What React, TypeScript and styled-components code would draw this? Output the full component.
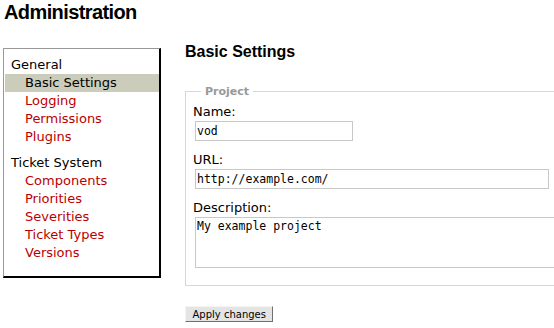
import styled, { createGlobalStyle } from "styled-components";

const GlobalStyle = createGlobalStyle`
  html, body {
    margin: 0;
    padding: 0;
    overflow: hidden;
    background: #fff;
  }
  body {
    font-family: "DejaVu Sans", Verdana, sans-serif;
    font-size: 13px;
    color: #000;
  }
`;

const Page = styled.div`
  padding: 1px 0 0 3px;
`;

const Title = styled.h1`
  margin: 0 0 0 1px;
  font: bold 20px/22px "Liberation Sans", Arial, sans-serif;
  letter-spacing: -0.6px;
`;

const Columns = styled.div`
  display: flex;
  align-items: flex-start;
  gap: 24px;
  margin-top: 17px;
`;

const Sidebar = styled.div`
  box-sizing: border-box;
  flex: none;
  width: 158px;
  margin-top: 8px;
  padding: 7px 0 14px 1px;
  border-style: solid;
  border-width: 1px 2px 2px 1px;
  border-color: #999 #000 #000 #999;
`;

const Group = styled.ul`
  list-style: none;
  margin: 0 0 8px;
  padding: 0;
  &:last-child {
    margin-bottom: 0;
  }
`;

const GroupTitle = styled.li`
  line-height: 18px;
  padding-left: 6px;
`;

const Item = styled.li<{ $active?: boolean }>`
  line-height: 18px;
  padding-left: 20px;
  background: ${(p) => (p.$active ? "#ccccbb" : "transparent")};
  color: ${(p) => (p.$active ? "#000" : "#b00")};
`;

const Main = styled.div`
  flex: 1;
  min-width: 0;
  overflow: hidden;
`;

const Heading = styled.h2`
  margin: 2px 0 0;
  font: bold 16px/20px "Liberation Sans", Arial, sans-serif;
`;

const Fieldset = styled.fieldset`
  box-sizing: border-box;
  width: 420px;
  margin: 23px 0 0;
  padding: 5px 0 17px 7px;
  border: 1px solid #d7d7d7;
`;

const Legend = styled.legend`
  margin-left: 8px;
  padding: 0 4px;
  font: bold 11px/13px "DejaVu Sans", Verdana, sans-serif;
  color: #999;
`;

const Field = styled.div`
  & + & {
    margin-top: 10px;
  }
`;

const Label = styled.label`
  display: block;
  line-height: 18px;
`;

const TextInput = styled.input<{ $wide?: boolean }>`
  display: block;
  box-sizing: border-box;
  width: ${(p) => (p.$wide ? "354px" : "158px")};
  height: 20px;
  margin: 0 0 0 2px;
  padding: 0 1px;
  border: 1px solid #c8c8c8;
  font: 11.5px "DejaVu Sans Mono", monospace;
  color: #000;
  outline: none;
`;

const TextArea = styled.textarea`
  display: block;
  box-sizing: border-box;
  width: 400px;
  height: 51px;
  margin: 0 0 0 2px;
  padding: 1px;
  border: 1px solid #c8c8c8;
  font: 11.5px "DejaVu Sans Mono", monospace;
  color: #000;
  resize: none;
  outline: none;
`;

const Button = styled.button`
  display: block;
  box-sizing: border-box;
  height: 16px;
  margin-top: 20px;
  padding: 0 6.5px;
  border: 1px solid;
  border-color: #f4f4f4 #707070 #707070 #f4f4f4;
  background: #e4e4e4;
  font: 10px/13px "DejaVu Sans", Verdana, sans-serif;
  color: #000;
`;

const general = ["Basic Settings", "Logging", "Permissions", "Plugins"];
const ticket = ["Components", "Priorities", "Severities", "Ticket Types", "Versions"];

export default function App() {
  return (
    <Page>
      <GlobalStyle />
      <Title>Administration</Title>
      <Columns>
        <Sidebar>
          <Group>
            <GroupTitle>General</GroupTitle>
            {general.map((name) => (
              <Item key={name} $active={name === "Basic Settings"}>
                {name}
              </Item>
            ))}
          </Group>
          <Group>
            <GroupTitle>Ticket System</GroupTitle>
            {ticket.map((name) => (
              <Item key={name}>{name}</Item>
            ))}
          </Group>
        </Sidebar>
        <Main>
          <Heading>Basic Settings</Heading>
          <Fieldset>
            <Legend>Project</Legend>
            <Field>
              <Label>Name:</Label>
              <TextInput defaultValue="vod" />
            </Field>
            <Field>
              <Label>URL:</Label>
              <TextInput $wide defaultValue="http://example.com/" />
            </Field>
            <Field>
              <Label>Description:</Label>
              <TextArea defaultValue="My example project" />
            </Field>
          </Fieldset>
          <Button>Apply changes</Button>
        </Main>
      </Columns>
    </Page>
  );
}
